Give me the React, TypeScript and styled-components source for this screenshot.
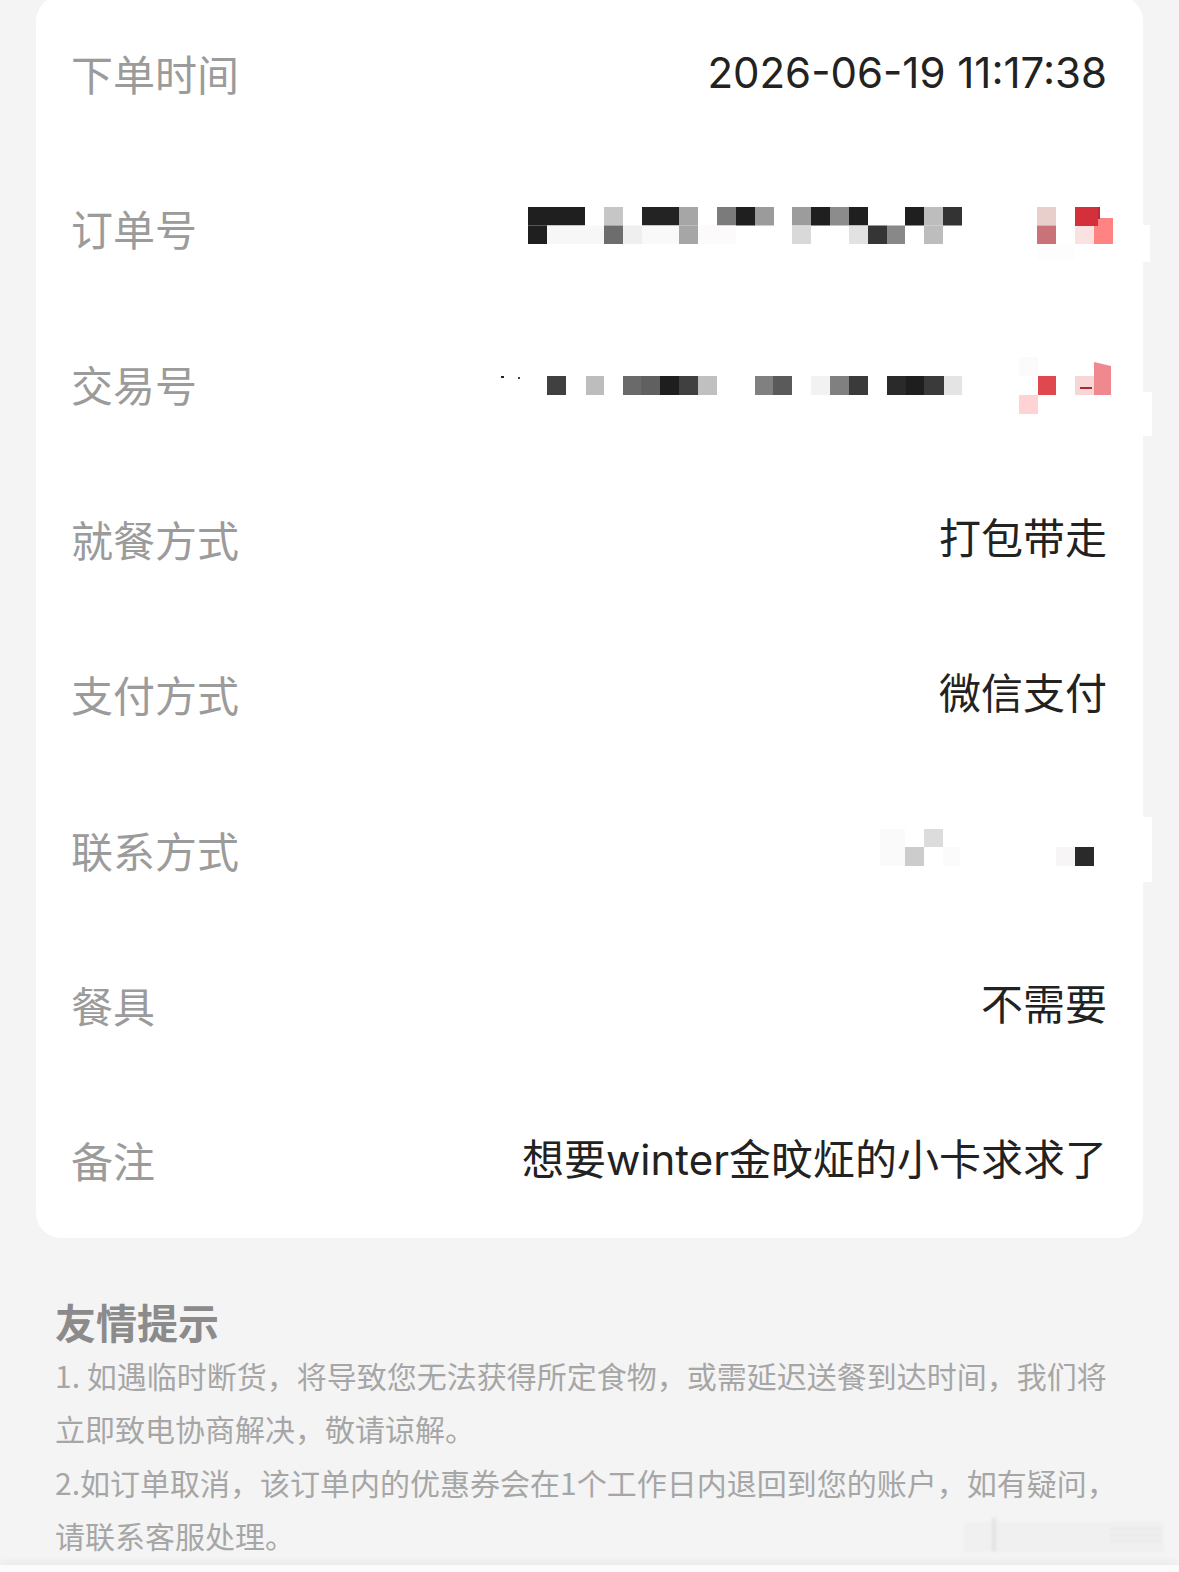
import React from "react";
import styled, { createGlobalStyle } from "styled-components";

const GlobalStyle = createGlobalStyle`
  html, body {
    margin: 0;
    padding: 0;
    background: #f4f4f4;
  }
  body {
    font-family: "Noto Sans CJK SC", "Noto Sans", sans-serif;
  }
`;

const Page = styled.div`
  position: relative;
  padding: 0 36px;
  min-height: 1572px;
  box-sizing: border-box;
`;

const Card = styled.section`
  margin-top: -4.5px;
  background: #ffffff;
  border-radius: 25px;
  display: flex;
  flex-direction: column;
`;

const Row = styled.div`
  height: 155.3px;
  display: flex;
  align-items: center;
  justify-content: space-between;
  padding: 0 36px 0 35px;
  box-sizing: border-box;
`;

const Label = styled.span`
  font-family: "Noto Sans CJK SC", sans-serif;
  font-size: 42px;
  line-height: 1;
  color: #9b9b9b;
  white-space: nowrap;
`;

const Value = styled.span`
  font-family: "Inter", "Noto Sans CJK SC", sans-serif;
  font-size: 42px;
  line-height: 1;
  color: #222222;
  white-space: nowrap;
`;

const MosaicSvg = styled.svg`
  flex-shrink: 0;
  display: block;
  margin-right: -49px;
  overflow: visible;
`;

const Tips = styled.section`
  padding: 55px 19px 0;
`;

const TipsTitle = styled.h3`
  margin: 0;
  font-family: "Noto Sans CJK SC", sans-serif;
  font-size: 41px;
  line-height: 56px;
  font-weight: 700;
  color: #8b8b8b;
`;

const TipText = styled.p`
  margin: 0;
  font-family: "Noto Sans CJK SC", sans-serif;
  font-size: 30px;
  line-height: 53.5px;
  color: #a6a6a6;
`;

const Watermark = styled.svg`
  position: absolute;
  left: 960px;
  top: 1518px;
  pointer-events: none;
`;

const BottomBar = styled.div`
  position: fixed;
  left: 0;
  right: 0;
  bottom: 0;
  height: 7px;
  background: #fbfbfb;
  box-shadow: 0 -3px 8px rgba(0, 0, 0, 0.05);
`;

type R = [number, number, number, number, string];

interface MosaicProps {
  x0: number;
  y0: number;
  rects: R[];
  poly?: { points: string; fill: string }[];
}

const RIGHT = 1156;
const H = 80;

const Mosaic: React.FC<MosaicProps> = ({ x0, y0, rects, poly }) => {
  const w = RIGHT - x0;
  return (
    <MosaicSvg width={w} height={H} viewBox={`${x0} ${y0} ${w} ${H}`}>
      {rects.map(([x, y, rw, rh, c], i) => (
        <rect key={i} x={x} y={y} width={rw} height={rh} fill={c} />
      ))}
      {poly?.map((p, i) => (
        <polygon key={`p${i}`} points={p.points} fill={p.fill} />
      ))}
    </MosaicSvg>
  );
};

const T1 = 208;
const T2 = 226.5;
const S = 18.5;

const orderRects: R[] = [
  [1115, 226, 35, 37, "#ffffff"],
  [1037, 245, 38, 16, "#fdfdfd"],
  // top row
  [528, T1, 57, S, "#1f1f1f"],
  [604, T1, 19, S, "#c6c6c6"],
  [642, T1, 37, S, "#232323"],
  [679, T1, 19, S, "#a6a6a6"],
  [717, T1, 19, S, "#7b7b7b"],
  [736, T1, 19, S, "#1f1f1f"],
  [755, T1, 19, S, "#9b9b9b"],
  [792, T1, 19, S, "#9c9c9c"],
  [811, T1, 19, S, "#1f1f1f"],
  [830, T1, 19, S, "#8c8c8c"],
  [849, T1, 19, S, "#1f1f1f"],
  [905, T1, 19, S, "#1f1f1f"],
  [924, T1, 19, S, "#bdbdbd"],
  [943, T1, 19, S, "#333333"],
  [1037, T1, 19, S, "#e8cfcc"],
  // bottom row
  [528, T2, 19, S, "#1f1f1f"],
  [547, T2, 57, S, "#f7f7f7"],
  [604, T2, 19, S, "#6d6d6d"],
  [623, T2, 19, S, "#efefef"],
  [642, T2, 37, S, "#f9f9f9"],
  [679, T2, 19, S, "#a6a6a6"],
  [698, T2, 38, S, "#fcfafa"],
  [792, T2, 19, S, "#d9d9d9"],
  [849, T2, 19, S, "#e2e2e2"],
  [868, T2, 19, S, "#353535"],
  [887, T2, 18, S, "#888888"],
  [924, T2, 19, S, "#bdbdbd"],
  [1037, T2, 19, S, "#c97379"],
  [1075, T2, 19, S, "#f9e2e0"],
  [1094, 219, 19, 26, "#ff8383"],
  [1075, T1, 23, 19, "#d4303c"],
  [1098, T1, 2, 12, "#b82a36"],
];

const X1 = 377;
const XS = 19;

const txRects: R[] = [
  [1115, 393, 37, 44, "#ffffff"],
  [1019, 358, 19, 19, "#fbfbfb"],
  [501, 377, 3, 2, "#222222"],
  [518, 378, 2, 2, "#444444"],
  [547, X1, 19, XS, "#404040"],
  [586, X1, 18, XS, "#bdbdbd"],
  [623, X1, 18, XS, "#6a6a6a"],
  [641, X1, 19, XS, "#606060"],
  [660, X1, 19, XS, "#1e1e1e"],
  [679, X1, 19, XS, "#404040"],
  [698, X1, 19, XS, "#c0c0c0"],
  [755, X1, 18, XS, "#808080"],
  [773, X1, 19, XS, "#5a5a5a"],
  [811, X1, 19, XS, "#f2f2f2"],
  [830, X1, 19, XS, "#808080"],
  [849, X1, 19, XS, "#3a3a3a"],
  [887, X1, 19, XS, "#2a2a2a"],
  [906, X1, 18, XS, "#1e1e1e"],
  [924, X1, 20, XS, "#3a3a3a"],
  [944, X1, 18, XS, "#e4e4e4"],
  [1038, X1, 18, XS, "#e04850"],
  [1019, 396, 19, 19, "#ffd3d3"],
  [1075, X1, 19, XS, "#f8d6d6"],
  [1080, 388, 12, 2, "#a82838"],
];

const txPoly = [{ points: "1094,363 1111,367 1111,396 1094,396", fill: "#f08890" }];

const contactRects: R[] = [
  [1143, 818, 9, 65, "#ffffff"],
  [880, 830, 25, 37, "#fafafa"],
  [924, 830, 19, 18, "#dcdcdc"],
  [905, 848, 19, 19, "#cccccc"],
  [943, 848, 17, 19, "#fbfbfb"],
  [1056, 848, 19, 19, "#f7f5f5"],
  [1075, 848, 19, 19, "#2a2a2a"],
];

type Item =
  | { label: string; value: string }
  | { label: string; mosaic: MosaicProps };

const items: Item[] = [
  { label: "下单时间", value: "2026-06-19 11:17:38" },
  { label: "订单号", mosaic: { x0: 496, y0: 189, rects: orderRects } },
  { label: "交易号", mosaic: { x0: 496, y0: 345, rects: txRects, poly: txPoly } },
  { label: "就餐方式", value: "打包带走" },
  { label: "支付方式", value: "微信支付" },
  { label: "联系方式", mosaic: { x0: 860, y0: 811, rects: contactRects } },
  { label: "餐具", value: "不需要" },
  { label: "备注", value: "想要winter金旼炡的小卡求求了" },
];

export default function App() {
  return (
    <>
      <GlobalStyle />
      <Page>
        <Card>
          {items.map((it) => (
            <Row key={it.label}>
              <Label>{it.label}</Label>
              {"value" in it ? <Value>{it.value}</Value> : <Mosaic {...it.mosaic} />}
            </Row>
          ))}
        </Card>
        <Tips>
          <TipsTitle>友情提示</TipsTitle>
          <TipText>
            1. 如遇临时断货，将导致您无法获得所定食物，或需延迟送餐到达时间，我们将立即致电协商解决，敬请谅解。
          </TipText>
          <TipText>
            2.如订单取消，该订单内的优惠券会在1个工作日内退回到您的账户，如有疑问，请联系客服处理。
          </TipText>
        </Tips>
        <Watermark width="210" height="42" viewBox="0 0 210 42">
          <defs>
            <filter id="wmblur">
              <feGaussianBlur stdDeviation="1.6" />
            </filter>
          </defs>
          <g filter="url(#wmblur)" opacity="0.55">
            <rect x="4" y="8" width="200" height="30" fill="#ededed" />
            <rect x="32" y="4" width="4" height="34" fill="#d6d6d6" />
            <rect x="150" y="14" width="52" height="2" fill="#dcdcdc" />
            <rect x="150" y="20" width="52" height="2" fill="#dcdcdc" />
            <rect x="150" y="26" width="52" height="2" fill="#dcdcdc" />
          </g>
        </Watermark>
      </Page>
      <BottomBar />
    </>
  );
}
